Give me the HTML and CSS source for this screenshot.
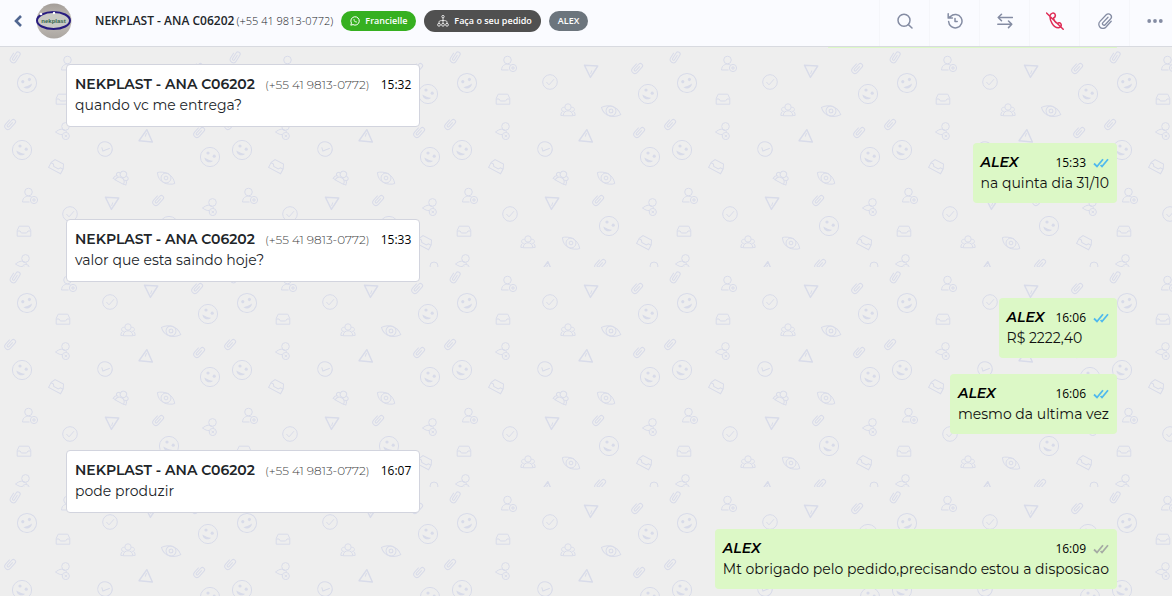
FILE: index.html
```
<!DOCTYPE html>
<html lang="pt-BR">
<head>
  <meta charset="UTF-8">
  <meta name="viewport" content="width=device-width, initial-scale=1.0">
  <title>NEKPLAST - ANA C06202</title>
  <link rel="stylesheet" href="styles.css">
</head>
<body>

<!-- Shared icons -->
<svg class="sprite" aria-hidden="true">
  <defs>
    <symbol id="double-check" viewBox="0 0 16 10">
      <path d="M1 5.5 4 8.5 10 1.2M7.6 7 9 8.5 15 1.2" fill="none" stroke="currentColor" stroke-width="1.8"/>
    </symbol>

    <g id="bg-clip" transform="rotate(42)">
      <path d="M-3.2-3V3A3.2 3.2 0 0 0 3.2 3V-4A2.2 2.2 0 0 0-1.2-4V2.6A1.1 1.1 0 0 0 1 2.6V-3"/>
    </g>
    <g id="bg-smile">
      <circle r="9.6"/>
      <circle class="solid" cx="-2" cy="-4" r="1.6"/>
      <circle class="solid" cx="4.2" cy="-.8" r="1.6"/>
      <path class="solid" d="M-5.6.4C-2.5 2.2 0 3.4 3 3.8 1.5 6.2-4.8 6.4-5.6.4Z"/>
    </g>
    <g id="bg-check">
      <circle r="7.3"/>
      <path d="M-3.6 0-1 2.8 4-2.8"/>
    </g>
    <g id="bg-send" class="thick">
      <path d="M-6.6-5.8 6.8-5-.6 6.4Z"/>
      <path d="M-.4 3 .8-.6" stroke-width="1"/>
    </g>
    <g id="bg-inbox">
      <path d="M-6.8 5.2V-.5L-4.8-4.8H4.8L6.8-.5V5.2ZM-6.8 0H-4L-2.6 2H2.6L4 0H6.8"/>
    </g>
    <g id="bg-user-add">
      <circle cx="-1.5" cy="-4" r="3.8"/>
      <path d="M-.5 6H-7.5C-7.2 1.5-4.5.2-1.5.2 0 .2 1 .5 1.6 1"/>
      <circle cx="4" cy="4" r="3.6"/>
      <path d="M4 2V6M2 4H6"/>
    </g>
    <g id="bg-user-x">
      <circle cx="2.5" cy="-4.6" r="3.8"/>
      <path d="M-1-2C-4-1.5-5.5-.5-7.5 1-5 3-2.5 3.7-1 3.6M-1-2C0-.6 2-.4 4 .4"/>
      <circle cx="2.8" cy="5" r="3.6"/>
      <path d="M1.5 3.7 4.1 6.3M4.1 3.7 1.5 6.3"/>
    </g>
    <g id="bg-users">
      <circle cy="-3" r="3.2"/>
      <path d="M-4.8 5.8C-4.6 2.2-2.6.8 0 .8S4.6 2.2 4.8 5.8ZM-3.5-2.4A2 2 0 1 0-3.6 1.2M3.5-2.4A2 2 0 1 1 3.6 1.2M-5.4 1.5C-6.8 2.2-7 3.6-7.2 5.4H-5M5.4 1.5C6.8 2.2 7 3.6 7.2 5.4H5"/>
    </g>
    <g id="bg-eye">
      <path d="M-8.6-5.5C-3-7 7-5 8.8 5.6 2 7.5-8 5-8.6-5.5Z"/>
      <circle r="5"/>
      <circle r="1.9"/>
    </g>

    <pattern id="doodles" width="220" height="220" patternUnits="userSpaceOnUse">
      <g fill="none" stroke="#d8dbe9">
        <use href="#bg-clip" transform="translate(15 10) rotate(-10)"/>
        <use href="#bg-user-add" transform="translate(69 17)"/>
        <use href="#bg-send" transform="translate(151 24)"/>
        <use href="#bg-clip" transform="translate(197 21)"/>
        <use href="#bg-smile" transform="translate(27 36) rotate(-45)"/>
        <use href="#bg-check" transform="translate(110 35)"/>
        <use href="#bg-smile" transform="translate(208 47)"/>
        <use href="#bg-inbox" transform="translate(63 52)"/>
        <use href="#bg-users" transform="translate(128 63)"/>
        <use href="#bg-eye" transform="translate(171 64) rotate(-12)"/>

        <use href="#bg-clip" transform="translate(10 77)"/>
        <use href="#bg-user-x" transform="translate(63 84)"/>
        <use href="#bg-send" transform="translate(146 89) rotate(182)"/>
        <use href="#bg-clip" transform="translate(199 85)"/>
        <use href="#bg-smile" transform="translate(22 103)"/>
        <use href="#bg-check" transform="translate(105 102) rotate(26)"/>
        <use href="#bg-smile" transform="translate(210 110)"/>
        <use href="#bg-inbox" transform="translate(57 119) rotate(28)"/>
        <use href="#bg-users" transform="translate(122 130) rotate(28)"/>
        <use href="#bg-eye" transform="translate(166 131)"/>

        <use href="#bg-user-add" transform="translate(30 149)"/>
        <use href="#bg-send" transform="translate(112 156)"/>
        <use href="#bg-clip" transform="translate(158 153)"/>
        <use href="#bg-user-x" transform="translate(210 160)"/>
        <use href="#bg-check" transform="translate(70 167)"/>
        <use href="#bg-smile" transform="translate(169 179)"/>
        <use href="#bg-inbox" transform="translate(24 184)"/>
        <use href="#bg-users" transform="translate(88 195)"/>
        <use href="#bg-eye" transform="translate(131 196)"/>
        <use href="#bg-inbox" transform="translate(205 195) rotate(28)"/>

        <use href="#bg-user-x" transform="translate(23 216)"/>
        <use href="#bg-send" transform="translate(107 221) rotate(182)"/>
        <use href="#bg-clip" transform="translate(160 217)"/>
        <circle cx="214" cy="219" r="4"/>
      </g>
    </pattern>
  </defs>
</svg>

<header class="chat-header">
  <button class="back" aria-label="Voltar">
    <svg width="10" height="14" viewBox="0 0 10 14"><path d="M8 2 3 7 8 12" fill="none" stroke="currentColor" stroke-width="2.6"/></svg>
  </button>

  <svg class="avatar" viewBox="0 0 36 36" role="img" aria-label="nekplast">
    <defs>
      <linearGradient id="avatar-bg" x1="0" y1="0" x2="0" y2="1">
        <stop offset="0" stop-color="#a39d98"/>
        <stop offset=".5" stop-color="#c4bfb9"/>
        <stop offset="1" stop-color="#aaa5a0"/>
      </linearGradient>
    </defs>
    <circle cx="18" cy="18" r="17.5" fill="url(#avatar-bg)"/>
    <ellipse cx="17.5" cy="17.5" rx="16.5" ry="8.5" fill="#c9cac4" stroke="#281c80" stroke-width="2"/>
    <circle cx="5" cy="11" r="1.3" fill="#fff"/>
    <circle cx="18" cy="10" r="1.2" fill="#fff"/>
    <text x="17.5" y="19.5" text-anchor="middle" class="avatar-text">nekplast</text>
  </svg>

  <h1 class="contact">NEKPLAST - ANA C06202 <span>(+55 41 9813-0772)</span></h1>

  <div class="tags">
    <span class="tag tag-green">
      <svg width="10" height="10" viewBox="0 0 10 10" fill="none" stroke="currentColor"><path d="M.8 9.2 1.4 7A4.2 4.2 0 1 1 3 8.6Z"/><path d="M3.5 3.2C3.4 5 5 6.6 6.8 6.5L6.9 5.7 5.9 5.2 5.3 5.6 4.4 4.7 4.7 4.1 4.2 3.1Z" fill="currentColor" stroke="none"/></svg>
      Francielle
    </span>
    <span class="tag tag-dark">
      <svg width="12" height="12" viewBox="0 0 12 12" fill="none" stroke="currentColor" stroke-width=".8"><circle cx="6" cy="1.6" r="1.2"/><path d="M6 3V8M2 8.5V6.8C2 5.8 4 5.5 6 5.5S10 5.8 10 6.8V8.5"/><circle cx="2" cy="9.8" r="1.4"/><circle cx="6" cy="9.8" r="1.4"/><circle cx="10" cy="9.8" r="1.4"/></svg>
      Faça o seu pedido
    </span>
    <span class="tag tag-gray">ALEX</span>
  </div>

  <nav class="toolbar">
    <button aria-label="Pesquisar">
      <svg viewBox="0 0 16 16"><circle cx="7" cy="7.2" r="6"/><path d="M11.4 11.6 15 15"/></svg>
    </button>
    <button aria-label="Histórico">
      <svg viewBox="0 0 16 16"><path d="M1.6 8.5A6.7 6.7 0 1 0 3.5 3.5L1.2 5M1.2.8V5H5.4M8 5.5V8.5H10.2"/></svg>
    </button>
    <button aria-label="Transferir">
      <svg viewBox="0 0 16 16"><path d="M15.5 4.5H1.2M4.5 1.2 1.2 4.5 4.5 7.8M.8 11.3H14.8M11.5 8 14.8 11.3 11.5 14.6"/></svg>
    </button>
    <button class="muted" aria-label="Ligação desativada">
      <svg class="phone" viewBox="0 0 18 18"><path d="M4 3.5C5 .8 8 .3 9 2.2 10 4.3 9 5.2 7.6 6 7.6 8 9.5 10.8 11.4 11.3 12.8 10.2 14.2 10.5 15 12 15.8 14 14.5 15.5 12.5 15.7 7 16 3.6 8 4 3.5ZM.5 1 17.2 17.2"/></svg>
    </button>
    <button aria-label="Anexar">
      <svg viewBox="0 0 16 16"><path d="M11 4.2 5.9 9.6A1.5 1.5 0 0 0 8.2 11.7L13.5 6A3 3 0 0 0 9.2 1.8L3 8.4A4 4 0 0 0 8.8 14.2L14.2 8.3" stroke-width="1.3"/></svg>
    </button>
    <button aria-label="Mais opções">
      <svg viewBox="0 0 16 16"><g fill="currentColor" stroke="none"><circle cx="2.2" cy="8" r="1.9"/><circle cx="8" cy="8" r="1.9"/><circle cx="13.8" cy="8" r="1.9"/></g></svg>
    </button>
  </nav>
</header>

<main class="chat">
  <svg class="wallpaper" width="100%" height="100%" aria-hidden="true"><rect width="100%" height="100%" fill="url(#doodles)"/></svg>

  <div class="messages">
    <div class="message sent message-end"></div>

    <article class="message received">
      <div class="meta"><strong>NEKPLAST - ANA C06202</strong><span class="phone-number">(+55 41 9813-0772)</span><time>15:32</time></div>
      <p>quando vc me entrega?</p>
    </article>

    <article class="message sent">
      <div class="meta"><strong>ALEX</strong><time>15:33</time><svg class="status read"><use href="#double-check"/></svg></div>
      <p>na quinta dia 31/10</p>
    </article>

    <article class="message received">
      <div class="meta"><strong>NEKPLAST - ANA C06202</strong><span class="phone-number">(+55 41 9813-0772)</span><time>15:33</time></div>
      <p>valor que esta saindo hoje?</p>
    </article>

    <article class="message sent">
      <div class="meta"><strong>ALEX</strong><time>16:06</time><svg class="status read"><use href="#double-check"/></svg></div>
      <p>R$ 2222,40</p>
    </article>

    <article class="message sent">
      <div class="meta"><strong>ALEX</strong><time>16:06</time><svg class="status read"><use href="#double-check"/></svg></div>
      <p>mesmo da ultima vez</p>
    </article>

    <article class="message received">
      <div class="meta"><strong>NEKPLAST - ANA C06202</strong><span class="phone-number">(+55 41 9813-0772)</span><time>16:07</time></div>
      <p>pode produzir</p>
    </article>

    <article class="message sent">
      <div class="meta"><strong>ALEX</strong><time>16:09</time><svg class="status"><use href="#double-check"/></svg></div>
      <p>Mt obrigado pelo pedido,precisando estou a disposicao</p>
    </article>
  </div>
</main>

</body>
</html>
```
FILE: styles.css
```
* {
  box-sizing: border-box;
}

body {
  margin: 0;
  height: 100vh;
  display: flex;
  flex-direction: column;
  overflow: hidden;
  font-family: Montserrat, Inter, sans-serif;
  color: #212529;
  background: #eee;
}

button {
  padding: 0;
  border: none;
  background: none;
  cursor: pointer;
}

.sprite {
  position: absolute;
  width: 0;
  height: 0;
}

/* Header */
.chat-header {
  flex: none;
  display: flex;
  align-items: center;
  height: 47px;
  padding: 0 0 5px 13px;
  overflow: hidden;
  background: #fafbff;
  border-bottom: 1px solid #d8dae0;
  font-family: "Segoe UI", "Open Sans", sans-serif;
}

.back {
  display: flex;
  margin-right: 13px;
  color: #506690;
}

.avatar {
  flex: none;
  width: 36px;
  height: 36px;
}

.avatar-text {
  font-family: "Liberation Sans", sans-serif;
  font-size: 6px;
  font-weight: bold;
  fill: #34684e;
}

.contact {
  margin: 0 8px 0 23px;
  font-size: 12px;
  line-height: 18px;
  font-weight: 600;
  white-space: nowrap;
}

.contact span {
  margin-left: -1px;
  font-size: 11px;
  font-weight: 300;
}

.tags {
  display: flex;
  align-items: center;
  gap: 8px;
}

.tag {
  display: flex;
  align-items: center;
  gap: 5px;
  height: 20px;
  padding: 0 9px;
  border-radius: 11px;
  color: #fff;
  font-size: 9px;
  font-weight: 600;
  white-space: nowrap;
}

.tag-green {
  background: #36b020;
}

.tag-dark {
  height: 22px;
  padding-left: 13px;
  background: #505050;
}

.tag-gray {
  background: #6c757d;
}

.toolbar {
  display: flex;
  align-self: flex-start;
  margin: 0 -7px 0 auto;
}

.toolbar button {
  display: flex;
  align-items: center;
  justify-content: center;
  width: 50px;
  height: 46px;
  padding-bottom: 5px;
  border-left: 1px solid #f5f6fa;
  color: #848ca3;
}

.toolbar svg {
  width: 16px;
  height: 16px;
  fill: none;
  stroke: currentColor;
  stroke-width: 1.5;
  stroke-linecap: round;
  stroke-linejoin: round;
}

.toolbar .muted {
  color: #df2b55;
}

.toolbar .phone {
  width: 18px;
  height: 18px;
}

/* Conversation */
.chat {
  position: relative;
  flex: 1;
  min-height: 0;
  overflow: hidden;
}

.wallpaper {
  position: absolute;
  top: 0;
  left: 0;
}

.solid {
  fill: #d8dbe9;
  stroke: none;
}

.thick {
  stroke-width: 1.4;
  stroke-linejoin: round;
}

.messages {
  position: relative;
  display: flex;
  flex-direction: column;
  gap: 16px;
  padding: 0 55px 16px 66px;
}

.message {
  max-width: 70%;
  padding: 9px 8px;
  border-radius: 4px;
  font-size: 14px;
  line-height: 21px;
}

.message p {
  margin: 0;
}

.received {
  align-self: flex-start;
  padding-bottom: 10px;
  background: #fff;
  border: 1px solid #d2d4de;
}

.sent {
  align-self: flex-end;
  background: #dcf8c6;
  color: #111;
}

/* bottom edge of the message scrolled out of view */
.message-end {
  width: 289px;
  height: 1px;
  padding: 0;
}

.meta {
  display: flex;
  align-items: center;
  white-space: nowrap;
}

.meta strong {
  font-weight: 600;
}

.sent strong {
  font-style: italic;
  color: #000;
}

.phone-number {
  margin-left: 10px;
  font-size: 12px;
  font-weight: 300;
  color: #444;
}

.meta time {
  margin-left: auto;
  padding-left: 11px;
  font-family: "Segoe UI", "Open Sans", sans-serif;
  font-size: 12px;
  color: #000;
}

.status {
  width: 16px;
  height: 10px;
  margin-left: 7px;
  color: #a5aba4;
}

.status.read {
  color: #4fb9ee;
}
```
